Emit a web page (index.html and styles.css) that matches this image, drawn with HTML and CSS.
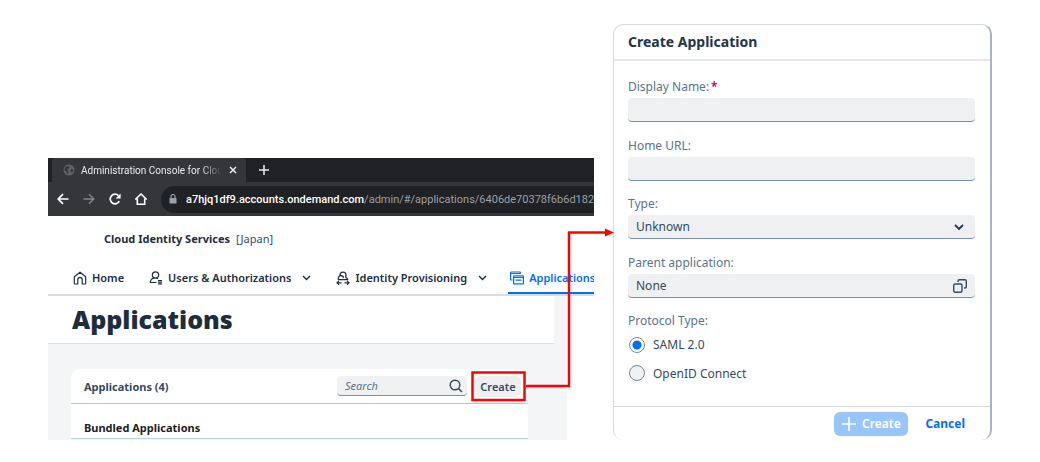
FILE: index.html
```html
<!DOCTYPE html>
<html lang="en">
<head>
<meta charset="utf-8">
<meta name="viewport" content="width=device-width, initial-scale=1">
<title>Create Application</title>
<link rel="stylesheet" href="styles.css">
</head>
<body>
<main class="stage">
  <section class="browser">
    <div class="tabstrip">
      <div class="tab">
        <svg class="globe" viewBox="0 0 12 12"><circle cx="6" cy="6" r="5.5" fill="#5f6368"/><path d="M2 3.5 4.5 2l2 .5-.5 2L4 5.500l1.500 2L5 10 3 7.500 1.500 6zM8 5l2.500.5L9.500 8.500 7.500 8z" fill="#35363a"/></svg>
        <span class="tab-title">Administration Console for Clou</span>
        <button class="chrome-btn tab-close" aria-label="Close tab"><svg viewBox="0 0 8 8"><path d="M1 1l6 6M7 1 1 7" stroke="#e8eaed" stroke-width="1.500"/></svg></button>
      </div>
      <button class="chrome-btn tab-new" aria-label="New tab"><svg viewBox="0 0 10 10"><path d="M5 0v10M0 5h10" stroke="#e8eaed" stroke-width="1.500"/></svg></button>
    </div>
    <div class="toolbar">
      <button class="chrome-btn tool" aria-label="Back"><svg viewBox="0 0 12 12"><path d="M11.500 6H1.500M6 1.200 1.200 6 6 10.800" fill="none" stroke="#fff" stroke-width="1.700"/></svg></button>
      <button class="chrome-btn tool" aria-label="Forward"><svg viewBox="0 0 12 12"><path d="M.5 6h10M6 1.200 10.800 6 6 10.800" fill="none" stroke="#85878a" stroke-width="1.400"/></svg></button>
      <button class="chrome-btn tool" aria-label="Reload"><svg viewBox="0 0 12 12"><path d="M10.300 8.200A4.800 4.800 0 1 1 9.500 2.700" fill="none" stroke="#fff" stroke-width="1.700"/><path d="M11.600.4v5H6.600z" fill="#fff"/></svg></button>
      <button class="chrome-btn tool" aria-label="Home page"><svg viewBox="0 0 12 12"><path d="M.3 6.500 6 1l5.700 5.500M2.300 5.500v5.700h7.400V5.500" fill="none" stroke="#fff" stroke-width="1.600"/></svg></button>
      <div class="address">
        <svg class="lock" viewBox="0 0 8 10"><rect x=".5" y="4" width="7" height="5.500" rx=".6" fill="#9aa0a6"/><path d="M2 4V2.500a2 2 0 0 1 4 0V4" fill="none" stroke="#9aa0a6" stroke-width="1.200"/></svg>
        <span class="url"><b>a7hjq1df9.accounts.ondemand.com</b>/admin/#/applications/6406de70378f6b6d182</span>
      </div>
    </div>
    <header class="shell"><strong>Cloud Identity Services</strong><span>[Japan]</span></header>
    <nav class="nav">
      <a class="nav-item" href="#home"><svg class="nav-icon" viewBox="0 0 14 14"><path d="M1.300 5.700 7 1.200l5.700 4.500v6.500a.8.8 0 0 1-.8.800H9.200V8.500a2.200 2.200 0 0 0-4.400 0V13H2.100a.8.8 0 0 1-.8-.8z" fill="none" stroke="currentColor" stroke-width="1.200" stroke-linejoin="round"/></svg>Home</a>
      <a class="nav-item nav-users" href="#users"><svg class="nav-icon" viewBox="0 0 14 14"><g fill="none" stroke="currentColor" stroke-width="1.200"><circle cx="6.500" cy="4" r="3.200"/><path d="M7.500 11.500H1.300C1.300 9 3 7 5.500 7.200M7.500 7.200l1.500.6M9 9.500h4M9 11.200h4M9 12.900h4"/></g></svg>Users &amp; Authorizations<svg class="nav-arrow" viewBox="0 0 9 6"><path d="m1 1 3.500 3.500L8 1" fill="none" stroke="currentColor" stroke-width="1.400"/></svg></a>
      <a class="nav-item nav-idp" href="#provisioning"><svg class="nav-icon" viewBox="0 0 14 14"><g fill="none" stroke="currentColor" stroke-width="1.200"><path d="M4 4.200a3 3 0 0 1 6 0c0 .9-.3 1.700-.8 2.300M2.200 8.800c0-2.500 1-4.200 2.800-4.200s2.500 1.200 2.500 2.400M9.500 6.500c1.500.2 2.300 1.200 2.300 2.800M2.200 8.700h9.600M1 11.800h4.500M3 9.800l-2 2 2 2M8.500 11.800H13M11 9.800l2 2-2 2"/></g></svg>Identity Provisioning<svg class="nav-arrow" viewBox="0 0 9 6"><path d="m1 1 3.500 3.500L8 1" fill="none" stroke="currentColor" stroke-width="1.400"/></svg></a>
      <a class="nav-item nav-apps" href="#applications"><svg class="nav-icon" viewBox="0 0 14 14"><g fill="none" stroke="currentColor" stroke-width="1.200"><path d="M2.500 9H1.200a.6.6 0 0 1-.6-.6V1.600A.6.600 0 0 1 1.200 1h8.600a.6.600 0 0 1 .6.600V3M.6 2.500h9.800"/><rect x="3.600" y="4.800" width="9.800" height="8" rx=".6"/><path d="M3.600 6.500h9.800M5.500 9.200h6"/></g></svg>Applications</a>
    </nav>
    <div class="content">
      <h1 class="page-title">Applications</h1>
      <div class="card">
        <div class="card-head">
          <h2 class="card-title">Applications (4)</h2>
          <div class="search">
            <input class="search-input" type="search" placeholder="Search" aria-label="Search">
            <svg class="search-icon" viewBox="0 0 14 14"><circle cx="6" cy="6" r="4.800" fill="none" stroke="#354a5f" stroke-width="1.400"/><path d="m9.500 9.500 3.500 3.500" stroke="#354a5f" stroke-width="1.500"/></svg>
          </div>
          <button class="create-btn">Create</button>
        </div>
        <h3 class="group-title">Bundled Applications</h3>
      </div>
    </div>
  </section>

  <form class="dialog">
    <h2 class="dialog-title">Create Application</h2>
    <div class="dialog-body">
      <div class="field">
        <label for="name">Display Name:<span class="required">*</span></label>
        <input class="control" id="name" type="text">
      </div>
      <div class="field">
        <label for="url">Home URL:</label>
        <input class="control" id="url" type="text">
      </div>
      <div class="field">
        <label for="type">Type:</label>
        <div class="control-wrap">
          <select class="control" id="type"><option>Unknown</option></select>
          <svg class="control-icon" viewBox="0 0 14 14"><path d="m2 5 4 4 4-4" fill="none" stroke="#223548" stroke-width="1.800"/></svg>
        </div>
      </div>
      <div class="field">
        <label for="parent">Parent application:</label>
        <div class="control-wrap">
          <input class="control" id="parent" type="text" value="None">
          <svg class="control-icon" viewBox="0 0 14 14"><g fill="none" stroke="#354a5f" stroke-width="1.400"><rect x=".7" y="5" width="8.300" height="8.300" rx="1.500"/><path d="M5 3V2.200C5 1.400 5.500.8 6.400.8h5.500c.8 0 1.400.6 1.400 1.400v5.300c0 .8-.6 1.500-1.400 1.500H11"/></g></svg>
        </div>
      </div>
      <fieldset class="protocol">
        <legend>Protocol Type:</legend>
        <label class="radio"><input type="radio" name="protocol" checked>SAML 2.0</label>
        <label class="radio"><input type="radio" name="protocol">OpenID Connect</label>
      </fieldset>
    </div>
    <footer class="dialog-foot">
      <button class="primary" type="button"><svg viewBox="0 0 14 14"><path d="M7 0v14M0 7h14" stroke="#fff" stroke-width="1.600"/></svg>Create</button>
      <button class="cancel" type="button">Cancel</button>
    </footer>
  </form>

  <svg class="callout" width="566" height="416" viewBox="0 0 566 416" aria-hidden="true">
    <g fill="none" stroke="#f00" stroke-width="2.500"><rect x="424.500" y="348.500" width="52" height="27.500"/><path d="M478 362h43V208.500h37"/></g>
    <path d="M557 204.500l9 4-9 4z" fill="#f00"/>
  </svg>
</main>
</body>
</html>
```
FILE: styles.css
```css
* { box-sizing: border-box; }

body {
  margin: 0;
  background: #fff;
  color: #1d2d3e;
  font-family: "Noto Sans", "Open Sans", sans-serif;
  font-size: 12px;
}

button, input, select { font: inherit; color: inherit; border: 0; margin: 0; }
h1, h2, h3 { margin: 0; }
svg { display: block; flex: none; }

.stage {
  position: relative;
  display: grid;
  grid-template-columns: minmax(0, 546fr) minmax(0, 379fr);
  align-items: end;
  gap: 19px;
  padding: 24px 48px 22px;
}

/* Browser window */
.browser { overflow: hidden; }

.tabstrip { display: flex; align-items: center; background: #202124; height: 24px; }
.tab {
  display: flex; align-items: center;
  width: 194px; height: 24px; margin-left: 4px; padding: 0 9px 0 11px;
  background: #35363a; border-radius: 4px 4px 0 0;
}
.globe { width: 12px; height: 12px; }
.tab-title {
  flex: 1; min-width: 0; margin: 0 7px 0 6px;
  overflow: hidden; white-space: nowrap;
  color: #e8eaed; font-family: Roboto, sans-serif; font-size: 10px;
  mask-image: linear-gradient(to right, #000 85%, transparent);
}
.chrome-btn { padding: 0; background: none; }
.tab-close svg { width: 8px; height: 8px; }
.tab-new { margin-left: 13px; }
.tab-new svg { width: 10px; height: 10px; }

.toolbar { display: flex; align-items: center; gap: 14px; height: 34px; padding-left: 9px; background: #35363a; }
.tool svg { width: 12px; height: 12px; }
.address {
  display: flex; align-items: center; flex: 1; min-width: 0; height: 27px; padding-left: 8px;
  border-radius: 14px 0 0 14px; background: #202124; overflow: hidden;
}
.lock { width: 8px; height: 10px; }
.url { margin-left: 9px; white-space: nowrap; color: #9aa0a6; font-family: Roboto, sans-serif; font-size: 11px; }
.url b { color: #fff; font-weight: 500; }

.shell { display: flex; align-items: center; gap: 6px; height: 45px; padding-left: 56px; font-size: 11px; }
.shell span { color: #354a5f; }

.nav { display: flex; height: 35px; padding-left: 25px; border-bottom: 2px solid #d9dce0; white-space: nowrap; }
.nav-item {
  display: flex; align-items: center; gap: 5px; height: 33px;
  border-bottom: 2px solid transparent;
  color: #1d2d3e; font-size: 11px; font-weight: 600; line-height: 15px; text-decoration: none;
  padding-top: 2px;
}
.nav-icon { width: 14px; height: 14px; }
.nav-arrow { width: 9px; height: 6px; margin-left: 6px; }
.nav-users { margin-left: 25px; }
.nav-idp { margin-left: 25px; }
.nav-apps { margin-left: 21px; padding-left: 2px; color: #0070f2; border-bottom-color: #0070f2; }

.content { margin-right: 27px; background: #f4f5f7; }
.page-title {
  height: 48px; margin-right: 13px; padding-left: 24px;
  border-bottom: 1px solid #dfe0e2; background: #fff;
  font-size: 25px; font-weight: 900; line-height: 47px;
}
.card { margin: 25px 39px 0 23px; background: #fff; border-radius: 9px 9px 0 0; }
.card-head { display: flex; align-items: center; height: 35px; padding: 0 7px 0 13px; border-bottom: 1px solid #b8c8d4; }
.card-title { flex: 1; color: #354a5f; font-size: 11px; }
.search { position: relative; width: 130px; margin-right: 8px; }
.search-input {
  display: block; width: 100%; height: 20px; padding: 0 28px 0 8px;
  border-bottom: 1px solid #7890a8; border-radius: 4px; background: #eff1f2;
  appearance: none; font-size: 11px;
}
.search-input::placeholder { color: #5b738b; font-style: italic; opacity: 1; }
.search-icon { position: absolute; top: 3px; right: 4px; width: 14px; height: 14px; }
.create-btn { width: 46px; height: 21px; padding: 0; border-radius: 6px; background: #edeff0; color: #354a5f; font-size: 11px; font-weight: 600; }
.group-title { height: 35px; padding-left: 13px; border-bottom: 1px solid #b8cfde; font-size: 11px; line-height: 47px; color: #222; }
.content::after { content: ""; display: block; height: 1px; background: #f4f5f7; }

/* Dialog */
.dialog {
  display: flex; flex-direction: column; min-height: 416px;
  border: 1px solid #d5dade; border-right: 2px solid #a9b4c2; border-bottom: 0; border-radius: 10px;
}
.dialog-title { height: 36px; padding-left: 14px; border-bottom: 2px solid #e5e8ea; font-size: 14px; line-height: 34px; color: #223548; }
.dialog-body { display: flex; flex-direction: column; flex: 1; justify-content: space-between; padding: 16px 15px 18px 14px; }
.field { display: grid; gap: 1px; color: #5b738b; font-size: 12px; line-height: 20px; }
.required { margin-left: 2px; color: #c8107c; font-weight: 700; }
.control-wrap { position: relative; }
.control {
  display: block; width: 100%; height: 24px; padding: 0 40px 0 8px;
  border-bottom: 1px solid #7890a8; border-radius: 4px; background: #eff0f2;
  appearance: none; color: #354a5f; font-size: 12px;
}
.control-icon { position: absolute; top: 5px; right: 8px; width: 14px; height: 14px; pointer-events: none; }
.protocol { margin: 0; padding: 0; border: 0; }
.protocol legend { padding: 0; color: #5b738b; line-height: 20px; }
.radio { display: flex; align-items: center; gap: 7px; height: 30px; color: #354a5f; }
.radio:first-of-type { height: 27px; }
.radio input { width: 16px; height: 16px; margin: 0 1px; border: 1px solid #7187a0; border-radius: 50%; background: #eff1f2; appearance: none; }
.radio input:checked { background: radial-gradient(circle, #0070f2 4px, #fff 5px); }
.dialog-foot { display: flex; align-items: center; justify-content: flex-end; gap: 17px; height: 34px; padding-right: 25px; border-top: 1px solid #d9d9d9; font-size: 12px; font-weight: 700; }
.primary { display: flex; align-items: center; justify-content: center; gap: 6px; width: 74px; height: 24px; padding: 0; border-radius: 6px; background: #99c6fa; color: #fff; font-weight: 600; }
.primary svg { width: 14px; height: 14px; }
.cancel { padding: 0; background: none; color: #0070f2; }

.callout { position: absolute; left: 48px; top: 24px; pointer-events: none; }
```
